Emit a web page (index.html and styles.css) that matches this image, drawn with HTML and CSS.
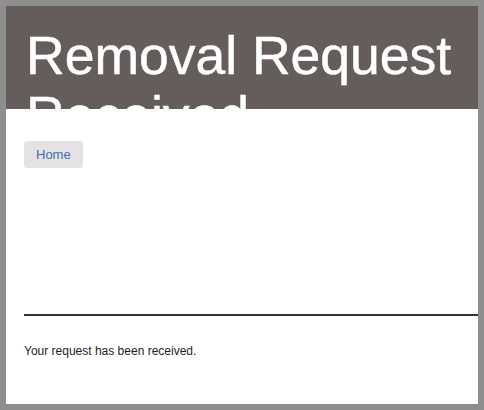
FILE: index.html
```html
<!DOCTYPE html>
<html lang="en">
<head>
    <meta charset="UTF-8">
    <meta name="viewport" content="width=device-width, initial-scale=1.0">
    <title>Removal Request Received</title>
    <link rel="stylesheet" href="styles.css">
</head>
<body>
    <div class="frame">
        <header class="banner">
            <h1>Removal Request Received</h1>
        </header>

        <div class="content">
            <a href="#" class="home-btn">Home</a>
            <hr class="divider">
            <p class="message">Your request has been received.</p>
        </div>
    </div>
</body>
</html>
```

FILE: styles.css
```css
/* General Styles */
* {
    margin: 0;
    padding: 0;
    box-sizing: border-box;
}

body {
    font-family: "Liberation Sans", Arial, sans-serif;
    background-color: #8e8e8e;
    padding: 6px;
    height: 410px;
    overflow: hidden;
}

.frame {
    width: 472px;
    height: 398px;
    background-color: #fff;
    overflow: hidden;
}

/* Header Styles */
.banner {
    height: 103px;
    background-color: #655c5c;
    padding: 20px 0 0 20px;
    overflow: hidden;
}

.banner h1 {
    color: #fff;
    font-size: 53.5px;
    font-weight: normal;
    -webkit-text-stroke: 0.5px #fff;
    line-height: 60px;
    width: 440px;
}

/* Content */
.content {
    padding: 32px 0 0 18px;
}

.home-btn {
    display: inline-block;
    background-color: #e6e2e3;
    color: #3b6fae;
    font-size: 13px;
    text-decoration: none;
    padding: 6px 12px;
    border-radius: 3px;
    line-height: 15px;
}

.divider {
    border: none;
    border-top: 2px solid #333;
    margin-top: 146px;
}

.message {
    font-size: 12px;
    color: #1e1e1e;
    margin-top: 28px;
}
```
